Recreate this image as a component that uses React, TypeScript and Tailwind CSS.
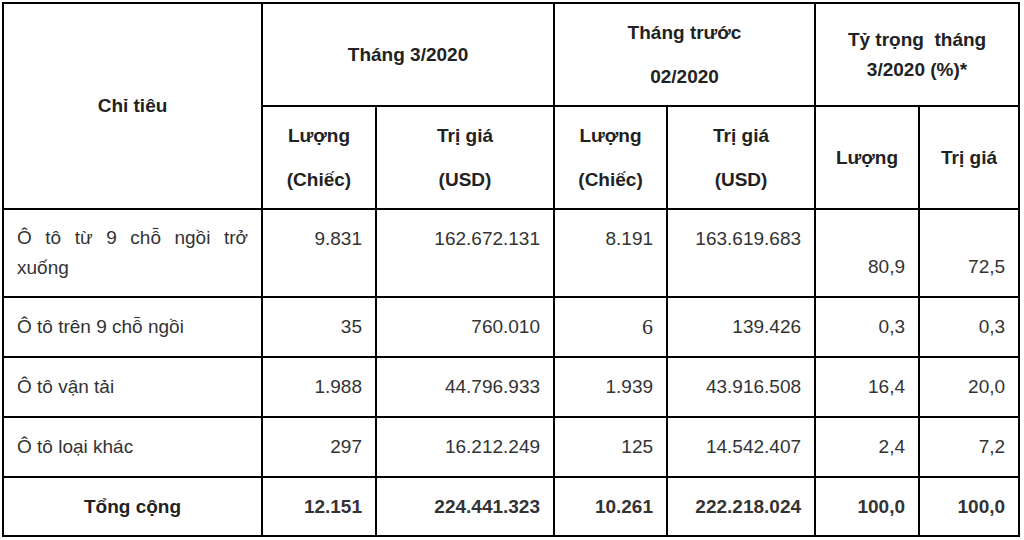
const font = "font-['Liberation_Sans',Arial,sans-serif]";
const cell = "border-2 border-black px-[13px] py-0";
const head = `${cell} text-center align-middle font-bold text-[#222]`;
const num = `${cell} text-right align-middle text-[#333]`;

interface Row {
  name: string;
  values: string[];
}

const rows: Row[] = [
  { name: "Ô tô trên 9 chỗ ngồi", values: ["35", "760.010", "6", "139.426", "0,3", "0,3"] },
  { name: "Ô tô vận tải", values: ["1.988", "44.796.933", "1.939", "43.916.508", "16,4", "20,0"] },
  { name: "Ô tô loại khác", values: ["297", "16.212.249", "125", "14.542.407", "2,4", "7,2"] },
];

const total = ["12.151", "224.441.323", "10.261", "222.218.024", "100,0", "100,0"];

function TwoLines({ a, b }: { a: string; b: string }) {
  return (
    <div className="flex flex-col gap-[14px]">
      <span>{a}</span>
      <span>{b}</span>
    </div>
  );
}

export default function App() {
  return (
    <div className={`w-[1024px] h-[540px] bg-white pl-[2px] pt-[2px] ${font} text-[19px] leading-[30px]`}>
      <table className="border-collapse table-fixed w-[1018px]">
        <colgroup>
          <col className="w-[259px]" />
          <col className="w-[114px]" />
          <col className="w-[178px]" />
          <col className="w-[113px]" />
          <col className="w-[148px]" />
          <col className="w-[104px]" />
          <col className="w-[100px]" />
        </colgroup>
        <tbody>
          <tr className="h-[103px]">
            <td rowSpan={2} className={head}>Chỉ tiêu</td>
            <td colSpan={2} className={head}>Tháng 3/2020</td>
            <td colSpan={2} className={head}>
              <TwoLines a="Tháng trước" b="02/2020" />
            </td>
            <td colSpan={2} className={head}>
              Tỷ trọng&nbsp; tháng
              <br />
              3/2020 (%)*
            </td>
          </tr>
          <tr className="h-[103px]">
            <td className={head}>
              <TwoLines a="Lượng" b="(Chiếc)" />
            </td>
            <td className={head}>
              <TwoLines a="Trị giá" b="(USD)" />
            </td>
            <td className={head}>
              <TwoLines a="Lượng" b="(Chiếc)" />
            </td>
            <td className={head}>
              <TwoLines a="Trị giá" b="(USD)" />
            </td>
            <td className={head}>Lượng</td>
            <td className={head}>Trị giá</td>
          </tr>
          <tr className="h-[88px]">
            <td className={`${cell} align-middle text-justify text-[#333]`}>
              Ô tô từ 9 chỗ ngồi trở xuống
            </td>
            <td className={`${cell} text-right align-top pt-[14px] text-[#333]`}>9.831</td>
            <td className={`${cell} text-right align-top pt-[14px] text-[#333]`}>162.672.131</td>
            <td className={`${cell} text-right align-top pt-[14px] text-[#333]`}>8.191</td>
            <td className={`${cell} text-right align-top pt-[14px] text-[#333]`}>163.619.683</td>
            <td className={`${cell} text-right align-bottom pb-[14px] text-[#333]`}>80,9</td>
            <td className={`${cell} text-right align-bottom pb-[14px] text-[#333]`}>72,5</td>
          </tr>
          {rows.map((r) => (
            <tr key={r.name} className="h-[60px]">
              <td className={`${cell} align-middle text-left text-[#333]`}>{r.name}</td>
              {r.values.map((v, i) => (
                <td
                  key={i}
                  className={
                    v === "6"
                      ? `${num} font-['Liberation_Serif','Times_New_Roman',serif] text-[22px]`
                      : num
                  }
                >
                  {v}
                </td>
              ))}
            </tr>
          ))}
          <tr className="h-[59px]">
            <td className={head}>Tổng cộng</td>
            {total.map((v, i) => (
              <td key={i} className={`${num} font-bold text-[#222]`}>
                {v}
              </td>
            ))}
          </tr>
        </tbody>
      </table>
    </div>
  );
}
